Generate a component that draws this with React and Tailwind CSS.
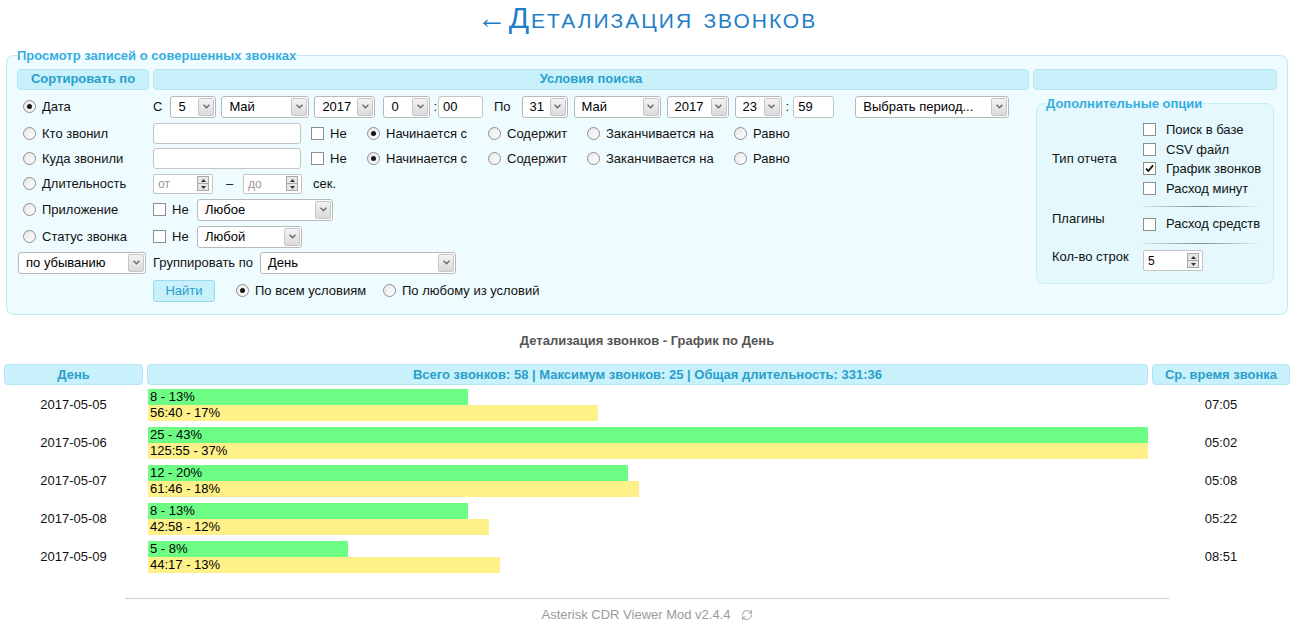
import React from "react";
import { RefreshCw } from "lucide-react";

const rows = [
  { day: "2017-05-05", calls: 8, callsPct: "13%", dur: "56:40", durPct: "17%", secs: 3400, avg: "07:05" },
  { day: "2017-05-06", calls: 25, callsPct: "43%", dur: "125:55", durPct: "37%", secs: 7555, avg: "05:02" },
  { day: "2017-05-07", calls: 12, callsPct: "20%", dur: "61:46", durPct: "18%", secs: 3706, avg: "05:08" },
  { day: "2017-05-08", calls: 8, callsPct: "13%", dur: "42:58", durPct: "12%", secs: 2578, avg: "05:22" },
  { day: "2017-05-09", calls: 5, callsPct: "8%", dur: "44:17", durPct: "13%", secs: 2657, avg: "08:51" },
];
const maxCalls = 25;
const maxSecs = 7555;

const Radio = ({ checked }) => (
  <span className="inline-flex h-[13px] w-[13px] shrink-0 items-center justify-center rounded-full border border-[#8e8e8e] bg-gradient-to-br from-[#e6e6e6] to-white">
    {checked && <span className="h-[5px] w-[5px] rounded-full bg-[#1a1a1a]" />}
  </span>
);

const Check = ({ checked }) => (
  <span className="inline-flex h-[13px] w-[13px] shrink-0 items-center justify-center border border-[#8e8e8e] bg-white">
    {checked && (
      <svg width="9" height="9" viewBox="0 0 9 9">
        <path d="M1 4.6 L3.4 7 L8 1.4" fill="none" stroke="#111" strokeWidth="1.8" />
      </svg>
    )}
  </span>
);

const Arrow = () => (
  <span className="m-px flex w-[16px] items-center justify-center rounded-[2px] border border-[#c6c6c6] bg-gradient-to-b from-[#f3f3f3] to-[#dadada]">
    <svg width="7" height="5" viewBox="0 0 7 5">
      <path d="M0.6 0.8 L3.5 3.8 L6.4 0.8" fill="none" stroke="#6a6a6a" strokeWidth="1.4" />
    </svg>
  </span>
);

const Select = ({ className, value }) => (
  <div className={`flex h-[22px] shrink-0 items-stretch rounded-[3px] border border-[#b8b8b8] bg-white ${className}`}>
    <span className="flex-1 truncate pl-[7px] leading-[20px] text-black">{value}</span>
    <Arrow />
  </div>
);

const TextBox = ({ className, value }) => (
  <div className={`flex shrink-0 items-center rounded-[3px] border border-[#c4c4c4] bg-white pl-[4px] text-black ${className}`}>
    {value}
  </div>
);

const Spin = ({ className, value, placeholder }) => (
  <div className={`flex h-[20px] shrink-0 items-center rounded-[2px] border border-[#c4c4c4] bg-white ${className}`}>
    <span className={`flex-1 pl-[4px] text-[12px] ${value ? "text-black" : "text-[#9a9a9a]"}`}>{value || placeholder}</span>
    <span className="mr-[3px] flex h-[15px] w-[12px] flex-col border border-[#a8a8a8] bg-[#e6e6e6]">
      <span className="flex flex-1 items-center justify-center border-b border-[#a8a8a8]">
        <svg width="5" height="3" viewBox="0 0 5 3"><path d="M0 3 L2.5 0 L5 3 Z" fill="#333" /></svg>
      </span>
      <span className="flex flex-1 items-center justify-center">
        <svg width="5" height="3" viewBox="0 0 5 3"><path d="M0 0 L2.5 3 L5 0 Z" fill="#333" /></svg>
      </span>
    </span>
  </div>
);

const Opt = ({ className = "", checked, label }) => (
  <div className={`flex items-center gap-[6px] ${className}`}>
    <Radio checked={checked} />
    <span>{label}</span>
  </div>
);

const HeadBox = ({ className = "", children }) => (
  <div className={`flex h-[21px] items-center justify-center rounded-[4px] border border-[#b4e5f2] bg-[#c8f1fb] text-[13px] font-bold text-[#2b9fcb] ${className}`}>
    {children}
  </div>
);

const MatchRow = () => (
  <>
    <TextBox className="h-[21px] w-[148px]" />
    <div className="ml-[10px] flex w-[56px] items-center gap-[6px]">
      <Check />
      <span>Не</span>
    </div>
    <Opt className="w-[121px]" checked label="Начинается с" />
    <Opt className="w-[99px]" label="Содержит" />
    <Opt className="w-[147px]" label="Заканчивается на" />
    <Opt label="Равно" />
  </>
);

const formRows = [
  {
    h: "h-[26px]",
    left: <Opt checked label="Дата" />,
    right: (
      <>
        <span>С</span>
        <Select className="ml-[8px] w-[46px]" value="5" />
        <Select className="ml-[5px] w-[88px]" value="Май" />
        <Select className="ml-[5px] w-[61px]" value="2017" />
        <Select className="ml-[8px] w-[47px]" value="0" />
        <span className="ml-[3px]">:</span>
        <TextBox className="ml-[1px] h-[22px] w-[45px]" value="00" />
        <span className="ml-[11px]">По</span>
        <Select className="ml-[11px] w-[46px]" value="31" />
        <Select className="ml-[6px] w-[87px]" value="Май" />
        <Select className="ml-[6px] w-[62px]" value="2017" />
        <Select className="ml-[6px] w-[47px]" value="23" />
        <span className="ml-[4px]">:</span>
        <TextBox className="ml-[4px] h-[22px] w-[41px]" value="59" />
        <Select className="ml-[21px] w-[154px]" value="Выбрать период..." />
      </>
    ),
  },
  { h: "h-[28px]", left: <Opt label="Кто звонил" />, right: <MatchRow /> },
  { h: "h-[22px]", left: <Opt label="Куда звонили" />, right: <MatchRow /> },
  {
    h: "h-[28px]",
    left: <Opt label="Длительность" />,
    right: (
      <>
        <Spin className="w-[60px]" placeholder="от" />
        <span className="ml-[13px] w-[17px]">–</span>
        <Spin className="w-[59px]" placeholder="до" />
        <span className="ml-[11px]">сек.</span>
      </>
    ),
  },
  {
    h: "h-[24px]",
    left: <Opt label="Приложение" />,
    right: (
      <>
        <div className="flex w-[44px] items-center gap-[6px]">
          <Check />
          <span>Не</span>
        </div>
        <Select className="w-[136px]" value="Любое" />
      </>
    ),
  },
  {
    h: "h-[30px]",
    left: <Opt label="Статус звонка" />,
    right: (
      <>
        <div className="flex w-[44px] items-center gap-[6px]">
          <Check />
          <span>Не</span>
        </div>
        <Select className="w-[105px]" value="Любой" />
      </>
    ),
  },
  {
    h: "h-[22px]",
    left: <Select className="-ml-[5px] w-[128px]" value="по убыванию" />,
    right: (
      <>
        <span className="w-[107px]">Группировать по</span>
        <Select className="w-[196px]" value="День" />
      </>
    ),
  },
  {
    h: "h-[34px]",
    left: null,
    right: (
      <>
        <button className="h-[22px] w-[62px] rounded-[3px] border border-[#9cd8ec] bg-[#c8f1fb] text-[13px] text-[#2b9fcb]">
          Найти
        </button>
        <Opt className="ml-[21px] w-[147px]" checked label="По всем условиям" />
        <Opt label="По любому из условий" />
      </>
    ),
  },
];

const reportTypes = [
  { label: "Поиск в базе", checked: false },
  { label: "CSV файл", checked: false },
  { label: "График звонков", checked: true },
  { label: "Расход минут", checked: false },
];

const Sep = ({ className }) => (
  <div className={`ml-[91px] h-px w-[117px] bg-gradient-to-r from-[#cfe7ee] via-[#7f8d91] to-[#e3f7fd] ${className}`} />
);

export default function App() {
  return (
    <div className="min-h-[625px] w-full bg-white font-['Liberation_Sans',Arial,sans-serif] text-[13px] text-[#111]">
      <div className="h-[46px] text-center">
        <a className="text-[30px] leading-[36px] tracking-[2px] text-[#1f7ec8] [font-variant:small-caps]">←Детализация звонков</a>
      </div>

      <fieldset className="mx-[6px] rounded-[8px] border border-[#bfe8f4] bg-[#effcff] px-[10px] pt-[3px] pb-[6px]">
        <legend className="text-[13px] font-bold text-[#38aee0]">Просмотр записей о совершенных звонках</legend>
        <div className="flex gap-[4px]">
          <div className="flex flex-1 flex-col">
            <div className="flex gap-[4px]">
              <HeadBox className="w-[132px]">Сортировать по</HeadBox>
              <HeadBox className="flex-1">Условия поиска</HeadBox>
            </div>
            <div className="mt-[4px] flex flex-col">
              {formRows.map((r, i) => (
                <div key={i} className={`flex items-center gap-[4px] ${r.h}`}>
                  <div className="flex w-[132px] shrink-0 items-center pl-[6px]">{r.left}</div>
                  <div className="flex flex-1 items-center">{r.right}</div>
                </div>
              ))}
            </div>
          </div>

          <div className="flex w-[244px] flex-col">
            <HeadBox />
            <fieldset className="mx-[3px] mt-[4px] rounded-[8px] border border-[#c8edf7] bg-[#e4f8fd] pl-[9px] pr-[10px] pb-[12px]">
              <legend className="text-[13px] font-bold text-[#38aee0]">Дополнительные опции</legend>
              <div className="ml-[6px] pt-[7px]">
                <div className="flex items-center">
                  <span className="w-[91px]">Тип отчета</span>
                  <div className="flex flex-col">
                    {reportTypes.map((t) => (
                      <div key={t.label} className="flex h-[19.5px] items-center gap-[10px]">
                        <Check checked={t.checked} />
                        <span>{t.label}</span>
                      </div>
                    ))}
                  </div>
                </div>
                <Sep className="mt-[8px] mb-[2px]" />
                <div className="flex">
                  <span className="w-[91px]">Плагины</span>
                  <div className="mt-[5px] flex h-[20px] items-center gap-[10px]">
                    <Check />
                    <span>Расход средств</span>
                  </div>
                </div>
                <Sep className="mt-[9px] mb-[3px]" />
                <div className="flex">
                  <span className="w-[91px]">Кол-во строк</span>
                  <Spin className="mt-[3px] h-[21px] w-[60px]" value="5" />
                </div>
              </div>
            </fieldset>
          </div>
        </div>
      </fieldset>

      <div className="mt-[16px] text-center text-[13px] font-bold text-[#555]">Детализация звонков - График по День</div>

      <div className="mt-[14px] px-[4px]">
        <div className="flex gap-[4px]">
          <HeadBox className="w-[139px]">День</HeadBox>
          <HeadBox className="flex-1">Всего звонков: 58 | Максимум звонков: 25 | Общая длительность: 331:36</HeadBox>
          <HeadBox className="w-[138px]">Ср. время звонка</HeadBox>
        </div>
        <div className="mt-[4px] flex flex-col gap-[6px]">
          {rows.map((r) => (
            <div key={r.day} className="flex h-[32px] items-center gap-[4px]">
              <div className="w-[139px] text-center">{r.day}</div>
              <div className="flex flex-1 flex-col pl-px text-[13px] leading-[16px] text-black">
                <div className="h-[16px] whitespace-nowrap bg-[#6dfd85] pl-[2px]" style={{ width: `${(r.calls / maxCalls) * 100}%` }}>
                  {r.calls} - {r.callsPct}
                </div>
                <div className="h-[16px] whitespace-nowrap bg-[#fef189] pl-[2px]" style={{ width: `${(r.secs / maxSecs) * 100}%` }}>
                  {r.dur} - {r.durPct}
                </div>
              </div>
              <div className="w-[138px] text-center">{r.avg}</div>
            </div>
          ))}
        </div>
      </div>

      <div className="mx-auto mt-[25px] w-[1044px] border-t border-[#cfcfcf] pt-[6px]">
        <div className="flex items-center justify-center gap-[10px] text-[13px] text-[#9a9a9a]">
          <span>Asterisk CDR Viewer Mod v2.4.4</span>
          <RefreshCw size={12} strokeWidth={2.2} className="text-[#aaa]" />
        </div>
      </div>
    </div>
  );
}
